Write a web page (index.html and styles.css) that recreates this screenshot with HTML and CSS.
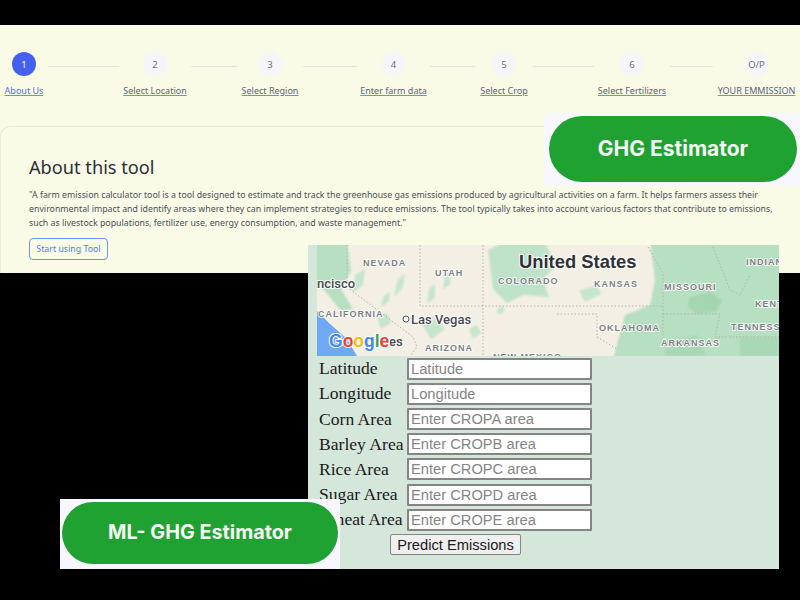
FILE: index.html
```html
<!DOCTYPE html>
<html lang="en">
<head>
    <meta charset="UTF-8">
    <title>GHG Estimator</title>
    <link rel="stylesheet" href="styles.css">
</head>
<body>
    <div class="slide">
        <section class="site">
            <div class="stepper">
                <div class="step active"><span class="dot">1</span><a href="#">About Us</a></div>
                <i class="line"></i>
                <div class="step"><span class="dot">2</span><a href="#">Select Location</a></div>
                <i class="line"></i>
                <div class="step"><span class="dot">3</span><a href="#">Select Region</a></div>
                <i class="line"></i>
                <div class="step"><span class="dot">4</span><a href="#">Enter farm data</a></div>
                <i class="line"></i>
                <div class="step"><span class="dot">5</span><a href="#">Select Crop</a></div>
                <i class="line"></i>
                <div class="step"><span class="dot">6</span><a href="#">Select Fertilizers</a></div>
                <i class="line"></i>
                <div class="step"><span class="dot">O/P</span><a href="#">YOUR EMMISSION</a></div>
            </div>
            <div class="about">
                <h2>About this tool</h2>
                <p>"A farm emission calculator tool is a tool designed to estimate and track the greenhouse gas emissions produced by agricultural activities on a farm. It helps farmers assess their environmental impact and identify areas where they can implement strategies to reduce emissions. The tool typically takes into account various factors that contribute to emissions, such as livestock populations, fertilizer use, energy consumption, and waste management."</p>
                <button class="start">Start using Tool</button>
            </div>
        </section>

        <div class="badge badge-top"><span class="pill">GHG Estimator</span></div>

        <section class="predict">
            <svg class="map" width="462" height="111" viewBox="0 0 462 111">
                <defs>
                    <filter id="soft" x="-5%" y="-5%" width="110%" height="110%">
                        <feGaussianBlur stdDeviation="1.1"/>
                    </filter>
                </defs>
                <rect width="462" height="111" fill="#f4efe4"/>
                <!-- green land -->
                <g filter="url(#soft)">
                    <path d="M333 -4H470V118H295L308 70 333 60 338 35Z" fill="#b7dfc2"/>
                    <path d="M171 5L190 -4H228L238 22 226 34 232 52 206 50 190 58 176 44Z" fill="#bfe3c8"/>
                    <path d="M-4 -4H30L34 26 24 44 36 64 24 66 8 46 -4 38Z" fill="#b7dfc2"/>
                    <path d="M38 30l10 -6 -2 16 -10 8ZM80 36l8 -8 -2 14 -9 10ZM66 52l7 -6 -1 10 -8 6ZM112 44l6 -5 0 14 -8 5ZM128 30l6 -4 -1 14 -7 4Z" fill="#c5e5cc"/>
                    <path d="M104 78l12 -6 12 12 -14 10ZM60 72l10 -4 4 10 -10 6ZM152 84l8 -4 4 8 -8 6ZM180 64l7 -3 0 6 -6 3ZM262 45l18 -4 4 8 -16 8Z" fill="#c5e5cc"/>
                    <path d="M373 52l20 -5 12 8 -6 12 -20 2 -8 -8Z" fill="#a4d5b1"/>
                    <path d="M423 92h39v19h-39ZM350 96l30 -6 8 21h-40Z" fill="#a8d8b5"/>
                </g>
                <path d="M0 66L12 78 30 94 40 111H0Z" fill="#6fa8f3"/>
                <!-- state borders -->
                <g fill="none" stroke="#b5b3a8" stroke-width="1" stroke-dasharray="1.5 2">
                    <path d="M30 0V42L96 92 100 102 93 111"/>
                    <path d="M103 0V61H346"/>
                    <path d="M166 0V111"/>
                    <path d="M240 69H280V92L300 104"/>
                    <path d="M331 2L346 28V92M346 69H403L398 92H462"/>
                    <path d="M396 2L413 45 423 50 433 30"/>
                </g>
                <g class="states">
                    <text x="46" y="21">NEVADA</text>
                    <text x="118" y="31">UTAH</text>
                    <text x="181" y="39">COLORADO</text>
                    <text x="277" y="42">KANSAS</text>
                    <text x="347" y="45">MISSOURI</text>
                    <text x="429" y="20">INDIANA</text>
                    <text x="438" y="62">KENTUCKY</text>
                    <text x="1" y="72">CALIFORNIA</text>
                    <text x="108" y="106">ARIZONA</text>
                    <text x="282" y="86">OKLAHOMA</text>
                    <text x="414" y="85">TENNESSEE</text>
                    <text x="344" y="101">ARKANSAS</text>
                    <text x="176" y="115">NEW MEXICO</text>
                </g>
                <text class="country" x="202" y="23">United States</text>
                <text class="city" x="0" y="43">ncisco</text>
                <circle cx="89" cy="74" r="3" fill="#fff" stroke="#555" stroke-width="1"/>
                <text class="city" x="94" y="79">Las Vegas</text>
                <text class="city" x="72" y="101">es</text>
                <text class="google" x="12" y="102"><tspan fill="#4285f4">G</tspan><tspan fill="#ea4335">o</tspan><tspan fill="#fbbc05">o</tspan><tspan fill="#4285f4">g</tspan><tspan fill="#34a853">l</tspan><tspan fill="#ea4335">e</tspan></text>
            </svg>
            <form class="fields">
                <label>Latitude</label><input placeholder="Latitude">
                <label>Longitude</label><input placeholder="Longitude">
                <label>Corn Area</label><input placeholder="Enter CROPA area">
                <label>Barley Area</label><input placeholder="Enter CROPB area">
                <label>Rice Area</label><input placeholder="Enter CROPC area">
                <label>Sugar Area</label><input placeholder="Enter CROPD area">
                <label>Wheat Area</label><input placeholder="Enter CROPE area">
                <button type="button" class="submit">Predict Emissions</button>
            </form>
        </section>

        <div class="badge badge-ml"><span class="pill">ML- GHG Estimator</span></div>
    </div>
</body>
</html>
```
FILE: styles.css
```css
* {
    box-sizing: border-box;
}
body {
    margin: 0;
    background: #000;
}
.slide {
    position: relative;
    width: 800px;
    height: 600px;
    overflow: hidden;
    background: #000;
}

/* top screenshot */
.site {
    position: absolute;
    left: 0;
    top: 25px;
    width: 800px;
    height: 248px;
    background: #fafbe6;
    font-family: "Noto Sans", "Open Sans", sans-serif;
}
.stepper {
    display: flex;
    align-items: flex-start;
    gap: 5px;
    padding: 27px 0 0 5px;
}
.step {
    display: flex;
    flex-direction: column;
    align-items: center;
    gap: 8px;
    flex: none;
    font-size: 9px;
}
.step a {
    color: #5c6470;
    white-space: nowrap;
    line-height: 14px;
    text-decoration-color: #5b9bd5;
}
.step:nth-of-type(1) { width: 38px; }
.step:nth-of-type(2) { width: 62px; }
.step:nth-of-type(3) { width: 56px; }
.step:nth-of-type(4) { width: 63px; }
.step:nth-of-type(5) { width: 48px; }
.step:nth-of-type(6) { width: 66px; }
.step:nth-of-type(7) { width: 77px; }
.dot {
    width: 24px;
    height: 24px;
    border-radius: 50%;
    background: #f6f6fa;
    color: #6b7280;
    font-size: 9.5px;
    display: flex;
    align-items: center;
    justify-content: center;
}
.step.active .dot {
    background: #4361ee;
    color: #fff;
}
.step.active a {
    color: #4f6ef0;
}
.line {
    flex: none;
    height: 1px;
    margin-top: 14px;
    background: #e3e5dc;
}
.line:nth-of-type(1) { width: 71px; }
.line:nth-of-type(2) { width: 46px; }
.line:nth-of-type(3) { width: 54px; }
.line:nth-of-type(4) { width: 45px; }
.line:nth-of-type(5) { width: 61px; }
.line:nth-of-type(6) { width: 43px; }

.about {
    margin-top: 28px;
    height: 147px;
    padding: 28px 28px 0;
    border: 1px solid #e8eada;
    border-bottom: none;
    border-right: none;
    border-top-left-radius: 10px;
}
.about h2 {
    margin: 0;
    font-size: 18.2px;
    font-weight: 400;
    line-height: 24px;
    color: #2b2f36;
}
.about p {
    margin: 9px 0 0;
    width: 745px;
    font-size: 8.8px;
    line-height: 14px;
    color: #4b5058;
}
.start {
    display: block;
    margin-top: 8px;
    width: 79px;
    height: 22px;
    padding: 0;
    background: transparent;
    border: 1px solid #6a97f0;
    border-radius: 4px;
    color: #4f80ea;
    font-family: inherit;
    font-size: 8.8px;
}

/* green pasted buttons */
.badge {
    position: absolute;
    display: flex;
    align-items: center;
    justify-content: center;
    background: #f8f7fd;
    z-index: 2;
}
.badge-top {
    left: 544px;
    top: 113px;
    width: 256px;
    height: 73px;
    padding: 3px 3px 4px 5px;
}
.badge-ml {
    left: 60px;
    top: 499px;
    width: 280px;
    height: 70px;
    padding: 3px 2px 5px 2px;
}
.pill {
    width: 100%;
    height: 100%;
    border-radius: 34px;
    background: #20a232;
    color: #f4fbf4;
    font-family: Inter, sans-serif;
    font-weight: 700;
    font-size: 21px;
    padding-bottom: 1px;
    display: flex;
    align-items: center;
    justify-content: center;
}
.badge-ml .pill {
    font-size: 19.8px;
    padding-bottom: 2px;
}

/* map + form screenshot */
.predict {
    position: absolute;
    left: 308px;
    top: 245px;
    width: 471px;
    height: 324px;
    padding-left: 9px;
    background: #d5e6da;
    overflow: hidden;
}
.map {
    display: block;
}
.states text {
    font-family: "Liberation Sans", sans-serif;
    font-size: 9px;
    font-weight: 700;
    letter-spacing: 1px;
    fill: #7b7f82;
    stroke: #fff;
    stroke-width: 1.5px;
    paint-order: stroke;
}
.country {
    font-family: "Liberation Sans", sans-serif;
    font-size: 18.4px;
    font-weight: 700;
    fill: #2f3235;
    stroke: #fff;
    stroke-width: 2px;
    paint-order: stroke;
}
.city {
    font-family: Roboto, sans-serif;
    font-size: 13px;
    font-weight: 500;
    fill: #45484b;
    stroke: #fff;
    stroke-width: 2px;
    paint-order: stroke;
}
.google {
    font-family: "Liberation Sans", sans-serif;
    font-size: 17.5px;
    font-weight: 700;
    stroke: #fff;
    stroke-width: 2px;
    paint-order: stroke;
}
.fields {
    display: grid;
    grid-template-columns: 88px 185px;
    grid-auto-rows: 21.4px;
    gap: 3.8px 0;
    padding: 2px 0 0 2px;
    align-items: center;
}
.fields label {
    font-family: "Liberation Serif", serif;
    font-size: 17.6px;
    color: #1a1a1a;
    white-space: nowrap;
}
.fields input {
    width: 185px;
    height: 22px;
    padding: 1px 2px;
    border: 2px solid #858585;
    border-radius: 1px;
    background: #fff;
    font-family: "Liberation Sans", sans-serif;
    font-size: 14.7px;
}
.fields input::placeholder {
    color: #858585;
}
.submit {
    grid-column: 1 / 3;
    justify-self: center;
    width: 131px;
    height: 21px;
    margin-top: -1px;
    padding: 0;
    border: 1px solid #858585;
    border-radius: 2px;
    background: #efefef;
    color: #1a1a1a;
    font-family: "Liberation Sans", sans-serif;
    font-size: 14.7px;
}
```
